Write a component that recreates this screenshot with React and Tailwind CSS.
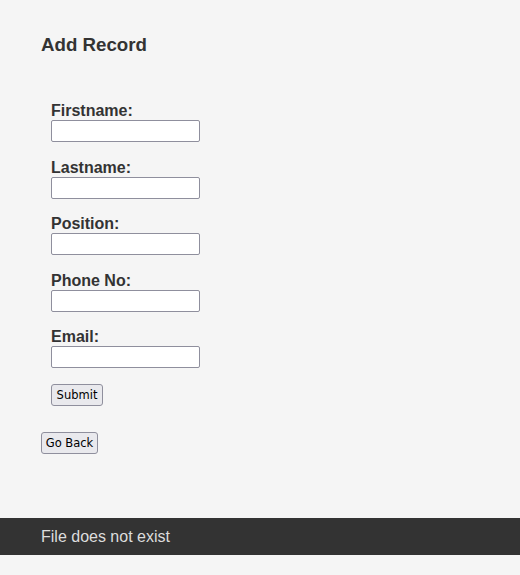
export default function App() {
  const fields = ["Firstname:", "Lastname:", "Position:", "Phone No:", "Email:"];
  return (
    <div className="min-h-screen bg-[#f5f5f5] font-['Liberation_Sans',Arial,sans-serif] text-[#333333]">
      <div className="px-[41px] pt-[34px]">
        <h3 className="text-[18.72px] leading-[22px] font-bold">Add Record</h3>
        <form className="pl-[10px] pt-[46px] flex flex-col" onSubmit={(e) => e.preventDefault()}>
          {fields.map((f, i) => (
            <div key={f} className={i === 0 ? "flex flex-col" : "flex flex-col mt-[16.5px]"}>
              <label className="text-[16px] leading-[18px] font-bold">{f}</label>
              <input
                type="text"
                className="w-[149px] h-[22px] bg-white border border-[#8f8f9d] rounded-[2px] outline-none"
              />
            </div>
          ))}
          <div className="mt-[16px] flex">
            <button
              type="submit"
              className="w-[52px] h-[22px] bg-[#e9e9ed] border border-[#8f8f9d] rounded-[3px] text-[11.5px] leading-[20px] font-['DejaVu_Sans',sans-serif] text-black"
            >
              Submit
            </button>
          </div>
        </form>
        <div className="mt-[26px] flex">
          <button
            type="button"
            className="w-[57px] h-[22px] bg-[#e9e9ed] border border-[#8f8f9d] rounded-[3px] text-[11.5px] leading-[20px] font-['DejaVu_Sans',sans-serif] text-black"
          >
            Go Back
          </button>
        </div>
      </div>
      <div className="mt-[64px] h-[37px] bg-[#333333] flex items-center px-[41px]">
        <span className="text-[16px] text-[#dddddd]">File does not exist</span>
      </div>
    </div>
  );
}
